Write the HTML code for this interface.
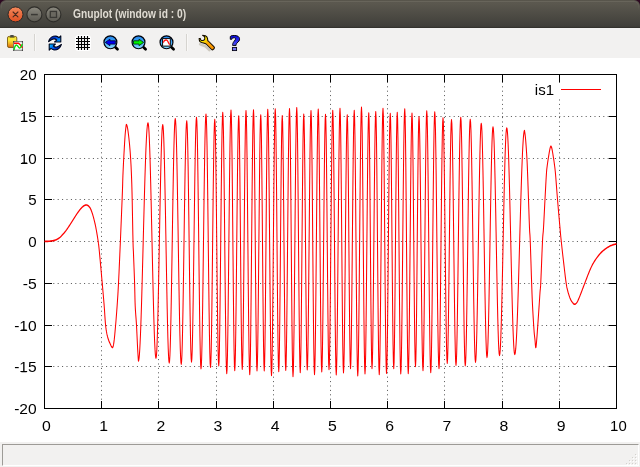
<!DOCTYPE html>
<html>
<head>
<meta charset="utf-8">
<title>Gnuplot (window id : 0)</title>
<style>
html,body{margin:0;padding:0;}
body{width:640px;height:467px;overflow:hidden;background:#2c0a21;font-family:"Liberation Sans",sans-serif;position:relative;}
#win{position:absolute;left:0;top:0;width:640px;height:467px;overflow:hidden;}
#title{position:absolute;left:0;top:0;width:640px;height:28px;background:linear-gradient(#57544a 0px,#59564d 1px,#5b584f 3px,#4d4b44 15px,#403f3a 26px,#3b3a35 27px,#33322e 27px,#33322e 28px);border-radius:6px 6px 0 0;overflow:hidden;}
#title::after{content:"";position:absolute;left:1px;top:1px;width:636px;height:9px;border-top:1px solid #68655b;border-left:1px solid rgba(110,107,97,0.55);border-right:1px solid rgba(110,107,97,0.55);border-radius:5px 5px 0 0;-webkit-mask-image:linear-gradient(#000 0px,#000 3px,transparent 9px);mask-image:linear-gradient(#000 0px,#000 3px,transparent 9px);}
#ttext{position:absolute;left:73px;top:6px;font:bold 12px "Liberation Sans",sans-serif;color:#dfdbd2;white-space:pre;display:inline-block;transform-origin:0 0;transform:scaleX(0.853);line-height:16px;}
#toolbar{position:absolute;left:0;top:28px;width:640px;height:30px;background:#f2f1f0;}
#plot{position:absolute;left:0;top:58px;width:640px;height:384px;background:#ffffff;}
#status{position:absolute;left:0;top:442px;width:640px;height:25px;background:#f2f1f0;}
#sbox{position:absolute;left:2px;top:2px;width:637px;height:22px;box-sizing:border-box;border-top:1px solid #9d9b97;border-left:1px solid #9d9b97;border-right:1px solid #ffffff;border-bottom:1px solid #ffffff;}
svg{position:absolute;left:0;top:0;will-change:transform;}
</style>
</head>
<body>
<div id="win">
<div id="title"><span id="ttext">Gnuplot (window id : 0)</span></div>
<div id="toolbar"></div>
<div id="plot"></div>
<div id="status"><div id="sbox"></div></div>
<svg width="640" height="467" viewBox="0 0 640 467">
<defs>
<linearGradient id="gclose" x1="0" y1="0" x2="0" y2="1"><stop offset="0" stop-color="#f58a5c"/><stop offset="1" stop-color="#df4f22"/></linearGradient>
<linearGradient id="gbtn" x1="0" y1="0" x2="0" y2="1"><stop offset="0" stop-color="#8b897f"/><stop offset="1" stop-color="#5b5952"/></linearGradient>
<linearGradient id="glens" x1="0" y1="0" x2="0" y2="1"><stop offset="0" stop-color="#2484ea"/><stop offset="0.45" stop-color="#3ea4f6"/><stop offset="1" stop-color="#8cdcff"/></linearGradient>
<linearGradient id="gclip" x1="0" y1="0" x2="0" y2="1"><stop offset="0" stop-color="#f4e43c"/><stop offset="0.35" stop-color="#fae838"/><stop offset="0.65" stop-color="#f2b020"/><stop offset="1" stop-color="#dc6410"/></linearGradient>
<linearGradient id="gwr" gradientUnits="userSpaceOnUse" x1="200" y1="37" x2="213" y2="49"><stop offset="0" stop-color="#fff800"/><stop offset="0.3" stop-color="#f8e000"/><stop offset="0.5" stop-color="#fcb400"/><stop offset="0.62" stop-color="#ffa000"/><stop offset="1" stop-color="#f89400"/></linearGradient>
<linearGradient id="grf" x1="0" y1="0" x2="0" y2="1"><stop offset="0" stop-color="#1040c0"/><stop offset="0.5" stop-color="#20a0ff"/><stop offset="1" stop-color="#1040c0"/></linearGradient>
<linearGradient id="grf1" gradientUnits="userSpaceOnUse" x1="52" y1="35.5" x2="58" y2="42"><stop offset="0" stop-color="#001070"/><stop offset="0.45" stop-color="#0040e0"/><stop offset="1" stop-color="#0098ff"/></linearGradient>
<linearGradient id="grf2" gradientUnits="userSpaceOnUse" x1="52" y1="44" x2="58" y2="50.5"><stop offset="0" stop-color="#00a8ff"/><stop offset="0.55" stop-color="#0040e0"/><stop offset="1" stop-color="#001070"/></linearGradient>
<linearGradient id="ghelp" gradientUnits="userSpaceOnUse" x1="0" y1="35" x2="0" y2="46"><stop offset="0" stop-color="#0808d8"/><stop offset="0.5" stop-color="#2828ee"/><stop offset="1" stop-color="#5c5cf8"/></linearGradient>
</defs>

<!-- title bar buttons -->
<g id="tb-buttons">
<circle cx="15.5" cy="14.4" r="7.5" fill="url(#gclose)" stroke="#2f2a26" stroke-width="1"/>
<path d="M13.1 12 L17.9 16.8 M17.9 12 L13.1 16.8" stroke="#4a2a1e" stroke-width="1.15" fill="none" stroke-linecap="round"/>
<circle cx="34.4" cy="14.4" r="7.5" fill="url(#gbtn)" stroke="#2f2e2a" stroke-width="1.1"/>
<path d="M31 14.6 L37.8 14.6" stroke="#3a3935" stroke-width="1.5" fill="none"/>
<circle cx="53.4" cy="14.4" r="7.5" fill="url(#gbtn)" stroke="#2f2e2a" stroke-width="1.1"/>
<rect x="50.3" y="11.4" width="6.2" height="6" fill="#6a6860" stroke="#3a3935" stroke-width="1.3"/>
</g>

<!-- toolbar icons -->
<g id="icons">
<!-- clipboard -->
<rect x="7.5" y="36.4" width="9.3" height="11.1" rx="1.6" fill="url(#gclip)" stroke="#7a5a10" stroke-width="0.9"/>
<rect x="9.6" y="37" width="5" height="1" fill="#6a5a20" opacity="0.7"/>
<rect x="10.1" y="35" width="3.7" height="2" rx="0.8" fill="#4a4a44"/>
<rect x="13.7" y="41.7" width="8.7" height="8.5" fill="#ffffff" stroke="#666666" stroke-width="0.9"/>
<path d="M13.2 41.2h1v1h-1z M21.9 41.2h1v1h-1z M13.2 49.7h1v1h-1z M21.9 49.7h1v1h-1z" fill="#1a1a1a"/>
<path d="M14 43.3 L18.4 43.3 C19.8 43.6 20.8 45.4 22.4 47.8" stroke="#ff0808" stroke-width="1.4" fill="none"/>
<path d="M14 50 C14.4 47.6 15 46 15.6 45.4 C16.4 44.6 17 45 17.8 46.2 C18.8 47.8 19.6 48.6 20.6 47.4 C21.2 46.6 21.8 45.2 22.3 44" stroke="#08e010" stroke-width="1.4" fill="none"/>
<!-- separator 1 -->
<rect x="34" y="34" width="1" height="17" fill="#d6d4d0"/>
<rect x="35" y="34" width="1" height="17" fill="#f9f8f7"/>
<!-- refresh -->
<g>
<g fill="#fff" stroke="#fff" stroke-width="2.6" stroke-linejoin="round" opacity="0.95">
<path d="M48.6 41.6 C49.6 37.4 53 35.7 56 36.1 C57.2 36.3 58.2 36.9 59 37.6 L60.8 35.8 L60.8 42 L54.6 42 L56.6 40 C55.6 39 54 38.7 52.6 39.3 C51 39.9 49.8 40.8 48.6 41.6 Z"/>
<path d="M61.4 44.4 C60.4 48.6 57 50.3 54 49.9 C52.8 49.7 51.8 49.1 51 48.4 L49.2 50.2 L49.2 44 L55.4 44 L53.4 46 C54.4 47 56 47.3 57.4 46.7 C59 46.1 60.2 45.2 61.4 44.4 Z"/>
</g>
<path d="M48.6 41.6 C49.6 37.4 53 35.7 56 36.1 C57.2 36.3 58.2 36.9 59 37.6 L60.8 35.8 L60.8 42 L54.6 42 L56.6 40 C55.6 39 54 38.7 52.6 39.3 C51 39.9 49.8 40.8 48.6 41.6 Z" fill="url(#grf1)" stroke="#00061c" stroke-width="1.15" stroke-linejoin="round"/>
<path d="M61.4 44.4 C60.4 48.6 57 50.3 54 49.9 C52.8 49.7 51.8 49.1 51 48.4 L49.2 50.2 L49.2 44 L55.4 44 L53.4 46 C54.4 47 56 47.3 57.4 46.7 C59 46.1 60.2 45.2 61.4 44.4 Z" fill="url(#grf2)" stroke="#00061c" stroke-width="1.15" stroke-linejoin="round"/>
</g>
<!-- grid -->
<rect x="75" y="35" width="16" height="16" rx="3.5" fill="#ffffff"/>
<path d="M76 38.5H90 M76 41.5H90 M76 44.5H90 M76 47.5H90 M78.5 36V50 M81.5 36V50 M84.5 36V50 M87.5 36V50" stroke="#000" stroke-width="1.15" fill="none"/>
<!-- zoom prev -->
<g>
<path d="M115.4 47.2 L117.5 49.3" stroke="#000" stroke-width="2.7" stroke-linecap="round"/>
<circle cx="110.4" cy="42.3" r="6.45" fill="url(#glens)" stroke="#000008" stroke-width="1.2"/>
<path d="M105.3 42.4 L109.9 39.2 L109.9 40.8 L115.4 40.8 L115.4 44.1 L109.9 44.1 L109.9 45.7 Z" fill="#0000f4" stroke="#000028" stroke-width="0.8" stroke-linejoin="round"/>
</g>
<!-- zoom next -->
<g>
<path d="M143.5 47.2 L145.6 49.3" stroke="#000" stroke-width="2.7" stroke-linecap="round"/>
<circle cx="138.5" cy="42.3" r="6.45" fill="url(#glens)" stroke="#000008" stroke-width="1.2"/>
<path d="M143.6 42.4 L139 39.2 L139 40.8 L133.5 40.8 L133.5 44.1 L139 44.1 L139 45.7 Z" fill="#00f400" stroke="#002800" stroke-width="0.8" stroke-linejoin="round"/>
</g>
<!-- zoom fit -->
<g>
<path d="M171.5 47.2 L173.6 49.3" stroke="#000" stroke-width="2.7" stroke-linecap="round"/>
<circle cx="166.5" cy="42.3" r="6.45" fill="url(#glens)" stroke="#000008" stroke-width="1.2"/>
<rect x="162.6" y="38.6" width="7.7" height="7.5" fill="#fff" stroke="#000" stroke-width="0.95"/>
<path d="M163.3 42.6 C163.9 40.8 164.6 40 165.8 40 L166.9 40.2 C168.2 41 168.3 43.6 169.7 44.6" stroke="#ff1010" stroke-width="1.3" fill="none"/>
</g>
<!-- separator 2 -->
<rect x="186" y="34" width="1" height="17" fill="#d6d4d0"/>
<rect x="187" y="34" width="1" height="17" fill="#f9f8f7"/>
<!-- wrench -->
<g>
<path d="M200.2 44.2 C202 45.4 204.4 45.6 205.6 46.4 L209.4 50" stroke="#a8a08c" stroke-width="2.6" stroke-linecap="round" fill="none" opacity="0.5"/>
<path d="M202.6 35.3 L205.4 35.8 C206.6 36.4 207.3 37.2 207.5 38.4 L207.8 40.7 L208.3 41 L213.9 46.6 C214.6 47.4 214.6 48 214.2 48.5 L212.7 49.8 C212.3 50 211.9 49.8 211.6 49.5 L206.1 44 L205 43.6 L201.7 42.6 C200.6 42.2 199.8 41.6 199.5 41 L199.1 38.6 L200.2 38.4 L200.7 39.8 C201.4 40.5 202.3 40.7 203.1 40.5 C204 40.2 204.6 39.7 204.7 39.1 C204.9 38.2 204.8 37.4 204.5 36.7 Z" fill="url(#gwr)" stroke="#140c00" stroke-width="1.05" stroke-linejoin="round"/>
</g>
<!-- help -->
<path d="M230.3 36.5 C230.9 35.9 231.5 35.7 232.2 35.6 C233 35.5 234 35.5 234.8 35.5 C236.2 35.5 237.4 35.9 238.2 36.4 C239 37 239.4 37.7 239.5 38.4 L239.5 39.8 C239.2 40.8 238.8 41.4 238 42.1 L236.4 43.7 C236.1 44.2 236.1 44.8 236.1 45.4 L232.6 45.4 C232.5 44.6 232.6 44.2 232.8 43.7 C233 42.9 233.3 42.3 233.8 41.7 L235.1 40 C235.5 39.4 235.6 38.9 235.5 38.5 C235.3 38 235 37.8 234.5 37.8 L232.9 37.9 C232.3 38.1 231.9 38.4 231.8 38.9 L231.8 39.3 L230.3 39.3 Z" fill="url(#ghelp)" stroke="#000010" stroke-width="1" stroke-linejoin="round"/>
<rect x="232.4" y="47.4" width="4.2" height="3.2" fill="#7474f6" stroke="#000010" stroke-width="0.85"/>
</g>

<!-- plot -->
<g id="grid" stroke="#000" stroke-opacity="0.68" stroke-width="1" fill="none" stroke-dasharray="1 3.4">
<path d="M101.5 408.5 V74.5"/>
<path d="M158.5 408.5 V74.5"/>
<path d="M216.5 408.5 V74.5"/>
<path d="M273.5 408.5 V74.5"/>
<path d="M330.5 408.5 V74.5"/>
<path d="M387.5 408.5 V74.5"/>
<path d="M444.5 408.5 V74.5"/>
<path d="M502.5 408.5 V74.5"/>
<path d="M559.5 408.5 V74.5"/>
<path d="M44.5 116.5 H616.5"/>
<path d="M44.5 158.5 H616.5"/>
<path d="M44.5 199.5 H616.5"/>
<path d="M44.5 241.5 H616.5"/>
<path d="M44.5 283.5 H616.5"/>
<path d="M44.5 325.5 H616.5"/>
<path d="M44.5 366.5 H616.5"/>
</g>
<rect x="558.8" y="83" width="1.6" height="15.2" fill="#fff"/>
<g id="axes" stroke="#000" stroke-width="1" fill="none">
<rect x="44.5" y="74.5" width="572" height="334"/>
<path d="M101.5 408.5 v-7.5 M101.5 74.5 v7.5"/>
<path d="M158.5 408.5 v-7.5 M158.5 74.5 v7.5"/>
<path d="M216.5 408.5 v-7.5 M216.5 74.5 v7.5"/>
<path d="M273.5 408.5 v-7.5 M273.5 74.5 v7.5"/>
<path d="M330.5 408.5 v-7.5 M330.5 74.5 v7.5"/>
<path d="M387.5 408.5 v-7.5 M387.5 74.5 v7.5"/>
<path d="M444.5 408.5 v-7.5 M444.5 74.5 v7.5"/>
<path d="M502.5 408.5 v-7.5 M502.5 74.5 v7.5"/>
<path d="M559.5 408.5 v-7.5 M559.5 74.5 v7.5"/>
<path d="M44.5 116.5 h7.5 M616.5 116.5 h-7.5"/>
<path d="M44.5 158.5 h7.5 M616.5 158.5 h-7.5"/>
<path d="M44.5 199.5 h7.5 M616.5 199.5 h-7.5"/>
<path d="M44.5 241.5 h7.5 M616.5 241.5 h-7.5"/>
<path d="M44.5 283.5 h7.5 M616.5 283.5 h-7.5"/>
<path d="M44.5 325.5 h7.5 M616.5 325.5 h-7.5"/>
<path d="M44.5 366.5 h7.5 M616.5 366.5 h-7.5"/>
</g>
<g id="labels" font-family="Liberation Sans, sans-serif" font-size="14.5" fill="#000">
<text x="46.4" y="430.8" text-anchor="middle" textLength="8.8" lengthAdjust="spacingAndGlyphs">0</text>
<text x="103.6" y="430.8" text-anchor="middle" textLength="8.8" lengthAdjust="spacingAndGlyphs">1</text>
<text x="160.8" y="430.8" text-anchor="middle" textLength="8.8" lengthAdjust="spacingAndGlyphs">2</text>
<text x="218.0" y="430.8" text-anchor="middle" textLength="8.8" lengthAdjust="spacingAndGlyphs">3</text>
<text x="275.2" y="430.8" text-anchor="middle" textLength="8.8" lengthAdjust="spacingAndGlyphs">4</text>
<text x="332.4" y="430.8" text-anchor="middle" textLength="8.8" lengthAdjust="spacingAndGlyphs">5</text>
<text x="389.6" y="430.8" text-anchor="middle" textLength="8.8" lengthAdjust="spacingAndGlyphs">6</text>
<text x="446.8" y="430.8" text-anchor="middle" textLength="8.8" lengthAdjust="spacingAndGlyphs">7</text>
<text x="504.0" y="430.8" text-anchor="middle" textLength="8.8" lengthAdjust="spacingAndGlyphs">8</text>
<text x="561.2" y="430.8" text-anchor="middle" textLength="8.8" lengthAdjust="spacingAndGlyphs">9</text>
<text x="618.4" y="430.8" text-anchor="middle" textLength="16.6" lengthAdjust="spacingAndGlyphs">10</text>
<text x="36.7" y="80.0" text-anchor="end" textLength="16.9" lengthAdjust="spacingAndGlyphs">20</text>
<text x="36.7" y="121.8" text-anchor="end" textLength="16.9" lengthAdjust="spacingAndGlyphs">15</text>
<text x="36.7" y="163.5" text-anchor="end" textLength="16.9" lengthAdjust="spacingAndGlyphs">10</text>
<text x="36.7" y="205.2" text-anchor="end" textLength="8.4" lengthAdjust="spacingAndGlyphs">5</text>
<text x="36.7" y="247.0" text-anchor="end" textLength="8.4" lengthAdjust="spacingAndGlyphs">0</text>
<text x="36.7" y="288.8" text-anchor="end" textLength="14.0" lengthAdjust="spacingAndGlyphs">-5</text>
<text x="36.7" y="330.5" text-anchor="end" textLength="22.5" lengthAdjust="spacingAndGlyphs">-10</text>
<text x="36.7" y="372.2" text-anchor="end" textLength="22.5" lengthAdjust="spacingAndGlyphs">-15</text>
<text x="36.7" y="414.0" text-anchor="end" textLength="22.5" lengthAdjust="spacingAndGlyphs">-20</text>
<text x="554" y="95" text-anchor="end" textLength="19.2" lengthAdjust="spacingAndGlyphs">is1</text>
<rect x="101.35" y="429.75" width="5.3" height="1.05"/>
<rect x="611.85" y="429.75" width="5.3" height="1.05"/>
<rect x="21.85" y="120.70" width="5.3" height="1.05"/>
<rect x="21.85" y="162.45" width="5.3" height="1.05"/>
<rect x="21.35" y="329.45" width="5.3" height="1.05"/>
<rect x="21.35" y="371.20" width="5.3" height="1.05"/>
<rect x="547.35" y="93.95" width="5.3" height="1.05"/>
</g>
<g transform="scale(1,1.5)"><path id="curve" d="M44.50 160.93 L44.95 160.93 L45.57 160.93 L46.31 160.93 L47.11 160.92 L47.92 160.90 L48.70 160.87 L49.48 160.81 L50.30 160.75 L51.14 160.67 L51.96 160.58 L52.72 160.49 L53.40 160.40 L53.97 160.32 L54.44 160.24 L54.86 160.17 L55.26 160.07 L55.70 159.96 L56.20 159.80 L56.79 159.60 L57.43 159.38 L58.10 159.12 L58.77 158.85 L59.41 158.56 L60.00 158.27 L60.52 157.96 L61.00 157.64 L61.46 157.31 L61.90 156.97 L62.34 156.62 L62.80 156.27 L63.28 155.91 L63.76 155.55 L64.25 155.18 L64.74 154.80 L65.22 154.40 L65.70 154.00 L66.16 153.59 L66.61 153.18 L67.05 152.76 L67.50 152.32 L67.98 151.85 L68.50 151.33 L69.06 150.77 L69.66 150.16 L70.29 149.52 L70.93 148.86 L71.57 148.20 L72.20 147.53 L72.83 146.86 L73.46 146.18 L74.09 145.48 L74.73 144.79 L75.37 144.12 L76.00 143.47 L76.64 142.83 L77.30 142.20 L77.96 141.58 L78.61 140.98 L79.22 140.43 L79.80 139.93 L80.33 139.49 L80.84 139.09 L81.32 138.73 L81.77 138.41 L82.20 138.12 L82.60 137.87 L82.97 137.65 L83.31 137.47 L83.62 137.33 L83.91 137.20 L84.21 137.10 L84.50 137.00 L84.80 136.91 L85.09 136.83 L85.38 136.76 L85.66 136.71 L85.93 136.68 L86.20 136.67 L86.46 136.67 L86.72 136.69 L86.97 136.73 L87.22 136.79 L87.46 136.85 L87.70 136.93 L87.92 137.02 L88.14 137.11 L88.34 137.22 L88.55 137.34 L88.77 137.49 L89.00 137.67 L89.25 137.86 L89.50 138.08 L89.77 138.31 L90.04 138.58 L90.32 138.90 L90.60 139.27 L90.89 139.69 L91.19 140.17 L91.49 140.70 L91.79 141.26 L92.10 141.85 L92.40 142.47 L92.70 143.12 L93.01 143.81 L93.31 144.54 L93.61 145.28 L93.91 146.04 L94.20 146.80 L94.48 147.55 L94.75 148.31 L95.02 149.08 L95.28 149.87 L95.54 150.69 L95.80 151.53 L96.06 152.44 L96.33 153.40 L96.59 154.39 L96.84 155.37 L97.08 156.32 L97.30 157.20 L97.50 157.99 L97.67 158.71 L97.83 159.40 L97.99 160.08 L98.14 160.80 L98.30 161.60 L98.44 162.29 L98.56 162.82 L98.68 163.39 L98.82 164.20 L99.02 165.44 L99.30 167.33 L99.69 170.09 L100.18 173.60 L100.72 177.55 L101.27 181.63 L101.79 185.53 L102.25 188.93 L102.64 191.85 L102.99 194.52 L103.32 197.01 L103.63 199.39 L103.92 201.69 L104.20 204.00 L104.46 206.33 L104.69 208.64 L104.90 210.89 L105.12 213.03 L105.34 215.03 L105.60 216.83 L105.88 218.43 L106.17 219.84 L106.48 221.10 L106.80 222.25 L107.14 223.31 L107.50 224.33 L107.88 225.29 L108.29 226.15 L108.71 226.93 L109.14 227.65 L109.58 228.31 L110.00 228.93 L110.43 229.57 L110.87 230.23 L111.31 230.84 L111.74 231.32 L112.14 231.62 L112.50 231.67 L112.81 231.47 L113.07 231.09 L113.31 230.51 L113.53 229.76 L113.76 228.81 L114.00 227.67 L114.26 226.30 L114.52 224.69 L114.79 222.89 L115.06 220.94 L115.33 218.91 L115.60 216.83 L115.88 214.66 L116.16 212.34 L116.45 209.93 L116.73 207.48 L117.00 205.04 L117.25 202.67 L117.48 200.47 L117.68 198.42 L117.88 196.39 L118.07 194.23 L118.28 191.79 L118.50 188.93 L118.74 185.70 L118.99 182.21 L119.24 178.44 L119.51 174.39 L119.80 170.02 L120.10 165.33 L120.44 159.95 L120.83 153.81 L121.23 147.36 L121.62 141.05 L121.97 135.34 L122.25 130.67 L122.44 127.19 L122.57 124.59 L122.66 122.58 L122.72 120.89 L122.80 119.23 L122.90 117.33 L123.03 115.28 L123.15 113.31 L123.29 111.39 L123.43 109.44 L123.58 107.44 L123.75 105.33 L123.94 103.01 L124.15 100.48 L124.37 97.89 L124.59 95.38 L124.81 93.09 L125.00 91.17 L125.17 89.62 L125.34 88.34 L125.49 87.28 L125.64 86.39 L125.77 85.62 L125.90 84.93 L126.01 84.32 L126.10 83.83 L126.18 83.45 L126.26 83.21 L126.37 83.10 L126.50 83.13 L126.67 83.29 L126.85 83.56 L127.06 83.96 L127.28 84.52 L127.51 85.25 L127.75 86.17 L128.01 87.33 L128.29 88.74 L128.58 90.31 L128.87 91.99 L129.15 93.69 L129.40 95.33 L129.63 96.93 L129.84 98.53 L130.05 100.16 L130.24 101.82 L130.42 103.54 L130.60 105.33 L130.77 107.20 L130.93 109.14 L131.09 111.12 L131.23 113.16 L131.37 115.23 L131.50 117.33 L131.61 119.28 L131.71 121.06 L131.80 122.86 L131.89 124.93 L131.99 127.45 L132.10 130.67 L132.24 134.97 L132.39 140.28 L132.56 146.05 L132.72 151.76 L132.87 156.86 L133.00 160.83 L133.10 163.38 L133.17 164.86 L133.24 165.74 L133.30 166.48 L133.39 167.53 L133.50 169.33 L133.65 172.01 L133.84 175.21 L134.04 178.72 L134.25 182.32 L134.44 185.80 L134.60 188.93 L134.72 191.73 L134.81 194.37 L134.89 196.89 L134.97 199.31 L135.07 201.67 L135.20 204.00 L135.38 206.24 L135.59 208.36 L135.82 210.41 L136.06 212.47 L136.29 214.59 L136.50 216.83 L136.70 219.30 L136.89 221.96 L137.08 224.68 L137.26 227.34 L137.44 229.82 L137.60 232.00 L137.76 233.92 L137.92 235.69 L138.07 237.28 L138.20 238.66 L138.32 239.80 L138.40 240.67 L138.74 240.17 L139.09 238.68 L139.43 236.21 L139.77 232.81 L140.11 228.51 L140.46 223.36 L140.80 217.43 L141.14 210.80 L141.49 203.54 L141.83 195.75 L142.17 187.54 L142.51 178.99 L142.86 170.22 L143.20 161.33 L143.54 152.45 L143.89 143.68 L144.23 135.13 L144.57 126.91 L144.91 119.13 L145.26 111.87 L145.60 105.24 L145.94 99.31 L146.29 94.16 L146.63 89.86 L146.97 86.45 L147.31 83.99 L147.66 82.50 L148.00 82.00 L148.33 82.67 L148.67 84.67 L149.00 87.97 L149.33 92.50 L149.67 98.19 L150.00 104.95 L150.33 112.66 L150.67 121.18 L151.00 130.38 L151.33 140.08 L151.67 150.14 L152.00 160.37 L152.33 170.60 L152.67 180.65 L153.00 190.36 L153.33 199.55 L153.67 208.07 L154.00 215.78 L154.33 222.54 L154.67 228.23 L155.00 232.77 L155.33 236.06 L155.67 238.06 L156.00 238.73 L156.34 237.78 L156.68 234.93 L157.01 230.26 L157.35 223.88 L157.69 215.95 L158.03 206.67 L158.36 196.26 L158.70 184.99 L159.04 173.12 L159.38 160.95 L159.71 148.78 L160.05 136.91 L160.39 125.64 L160.72 115.23 L161.06 105.95 L161.40 98.02 L161.74 91.64 L162.07 86.97 L162.41 84.12 L162.75 83.17 L163.09 84.25 L163.43 87.47 L163.78 92.73 L164.12 99.90 L164.46 108.78 L164.80 119.12 L165.14 130.65 L165.49 143.05 L165.83 155.98 L166.17 169.09 L166.51 182.02 L166.86 194.41 L167.20 205.94 L167.54 216.29 L167.88 225.16 L168.22 232.33 L168.57 237.60 L168.91 240.82 L169.25 241.90 L169.58 240.66 L169.92 236.99 L170.25 231.00 L170.58 222.86 L170.92 212.83 L171.25 201.22 L171.58 188.36 L171.92 174.66 L172.25 160.53 L172.58 146.40 L172.92 132.70 L173.25 119.85 L173.58 108.23 L173.92 98.20 L174.25 90.07 L174.58 84.07 L174.92 80.40 L175.25 79.17 L175.58 80.41 L175.92 84.10 L176.25 90.12 L176.58 98.30 L176.92 108.38 L177.25 120.06 L177.58 132.98 L177.92 146.75 L178.25 160.95 L178.58 175.15 L178.92 188.92 L179.25 201.84 L179.58 213.52 L179.92 223.60 L180.25 231.78 L180.58 237.80 L180.92 241.49 L181.25 242.73 L181.59 241.18 L181.94 236.57 L182.28 229.08 L182.62 219.00 L182.97 206.72 L183.31 192.71 L183.66 177.51 L184.00 161.70 L184.34 145.89 L184.69 130.69 L185.03 116.68 L185.38 104.40 L185.72 94.32 L186.06 86.83 L186.41 82.22 L186.75 80.67 L187.09 82.68 L187.43 88.62 L187.77 98.18 L188.11 110.89 L188.45 126.12 L188.79 143.09 L189.12 160.95 L189.46 178.81 L189.80 195.78 L190.14 211.01 L190.48 223.72 L190.82 233.28 L191.16 239.22 L191.50 241.23 L191.83 239.45 L192.17 234.19 L192.50 225.68 L192.83 214.28 L193.17 200.51 L193.50 184.95 L193.83 168.30 L194.17 151.27 L194.50 134.61 L194.83 119.06 L195.17 105.28 L195.50 93.89 L195.83 85.38 L196.17 80.11 L196.50 78.33 L196.85 80.77 L197.19 87.92 L197.54 99.38 L197.88 114.49 L198.23 132.35 L198.58 151.94 L198.92 172.12 L199.27 191.71 L199.62 209.58 L199.96 224.68 L200.31 236.15 L200.65 243.30 L201.00 245.73 L201.33 243.88 L201.67 238.40 L202.00 229.54 L202.33 217.68 L202.67 203.34 L203.00 187.15 L203.33 169.81 L203.67 152.09 L204.00 134.75 L204.33 118.56 L204.67 104.22 L205.00 92.36 L205.33 83.50 L205.67 78.02 L206.00 76.17 L206.35 78.62 L206.69 85.82 L207.04 97.36 L207.38 112.57 L207.73 130.56 L208.08 150.29 L208.42 170.61 L208.77 190.34 L209.12 208.33 L209.46 223.54 L209.81 235.08 L210.15 242.28 L210.50 244.73 L210.85 241.92 L211.21 233.68 L211.56 220.56 L211.92 203.47 L212.27 183.56 L212.62 162.20 L212.98 140.84 L213.33 120.93 L213.69 103.84 L214.04 90.72 L214.40 82.48 L214.75 79.67 L215.08 82.46 L215.42 90.66 L215.75 103.69 L216.08 120.68 L216.42 140.47 L216.75 161.70 L217.08 182.93 L217.42 202.72 L217.75 219.71 L218.08 232.74 L218.42 240.94 L218.75 243.73 L219.08 240.86 L219.42 232.43 L219.75 219.02 L220.08 201.55 L220.42 181.20 L220.75 159.37 L221.08 137.53 L221.42 117.18 L221.75 99.71 L222.08 86.30 L222.42 77.87 L222.75 75.00 L223.08 77.96 L223.42 86.65 L223.75 100.47 L224.08 118.47 L224.42 139.45 L224.75 161.95 L225.08 184.45 L225.42 205.42 L225.75 223.43 L226.08 237.25 L226.42 245.94 L226.75 248.90 L227.10 245.91 L227.46 237.15 L227.81 223.21 L228.17 205.05 L228.52 183.90 L228.88 161.20 L229.23 138.50 L229.58 117.35 L229.94 99.19 L230.29 85.25 L230.65 76.49 L231.00 73.50 L231.34 77.01 L231.68 87.26 L232.02 103.42 L232.36 124.18 L232.70 147.86 L233.05 172.54 L233.39 196.22 L233.73 216.98 L234.07 233.14 L234.41 243.39 L234.75 246.90 L235.08 244.01 L235.42 235.54 L235.75 222.07 L236.08 204.51 L236.42 184.06 L236.75 162.12 L237.08 140.17 L237.42 119.73 L237.75 102.17 L238.08 88.69 L238.42 80.22 L238.75 77.33 L239.10 81.46 L239.45 93.45 L239.80 112.11 L240.15 135.63 L240.50 161.70 L240.85 187.77 L241.20 211.29 L241.55 229.95 L241.90 241.94 L242.25 246.07 L242.59 242.58 L242.93 232.40 L243.27 216.34 L243.61 195.72 L243.95 172.21 L244.30 147.69 L244.64 124.18 L244.98 103.56 L245.32 87.50 L245.66 77.32 L246.00 73.83 L246.34 77.39 L246.68 87.78 L247.02 104.16 L247.36 125.20 L247.70 149.20 L248.05 174.20 L248.39 198.20 L248.73 219.24 L249.07 235.62 L249.41 246.01 L249.75 249.57 L250.09 246.00 L250.43 235.58 L250.77 219.15 L251.11 198.05 L251.45 173.99 L251.80 148.91 L252.14 124.85 L252.48 103.75 L252.82 87.32 L253.16 76.90 L253.50 73.33 L253.85 77.58 L254.20 89.92 L254.55 109.14 L254.90 133.36 L255.25 160.20 L255.60 187.04 L255.95 211.26 L256.30 230.48 L256.65 242.82 L257.00 247.07 L257.34 243.62 L257.68 233.54 L258.02 217.66 L258.36 197.26 L258.70 173.99 L259.05 149.74 L259.39 126.47 L259.73 106.07 L260.07 90.19 L260.41 80.12 L260.75 76.67 L261.10 80.84 L261.45 92.94 L261.80 111.79 L262.15 135.54 L262.50 161.87 L262.85 188.19 L263.20 211.95 L263.55 230.79 L263.90 242.90 L264.25 247.07 L264.60 242.81 L264.95 230.44 L265.30 211.19 L265.65 186.93 L266.00 160.03 L266.35 133.14 L266.70 108.88 L267.05 89.62 L267.40 77.26 L267.75 73.00 L268.09 76.59 L268.43 87.07 L268.77 103.59 L269.11 124.80 L269.45 149.01 L269.80 174.23 L270.14 198.43 L270.48 219.65 L270.82 236.17 L271.16 246.64 L271.50 250.23 L271.84 246.64 L272.18 236.14 L272.52 219.59 L272.86 198.33 L273.20 174.09 L273.55 148.81 L273.89 124.57 L274.23 103.31 L274.57 86.76 L274.91 76.26 L275.25 72.67 L275.60 76.95 L275.95 89.37 L276.30 108.71 L276.65 133.09 L277.00 160.12 L277.35 187.14 L277.70 211.52 L278.05 230.87 L278.40 243.29 L278.75 247.57 L279.10 243.40 L279.45 231.29 L279.80 212.45 L280.15 188.69 L280.50 162.37 L280.85 136.04 L281.20 112.29 L281.55 93.44 L281.90 81.34 L282.25 77.17 L282.60 81.32 L282.95 93.36 L283.30 112.12 L283.65 135.75 L284.00 161.95 L284.35 188.15 L284.70 211.78 L285.05 230.54 L285.40 242.58 L285.75 246.73 L286.09 243.20 L286.43 232.90 L286.77 216.67 L287.11 195.81 L287.45 172.01 L287.80 147.22 L288.14 123.43 L288.48 102.57 L288.82 86.33 L289.16 76.03 L289.50 72.50 L289.85 76.87 L290.20 89.54 L290.55 109.27 L290.90 134.14 L291.25 161.70 L291.60 189.26 L291.95 214.13 L292.30 233.86 L292.65 246.53 L293.00 250.90 L293.34 247.27 L293.68 236.69 L294.02 220.00 L294.36 198.56 L294.70 174.11 L295.05 148.62 L295.39 124.17 L295.73 102.73 L296.07 86.05 L296.41 75.46 L296.75 71.83 L297.10 76.15 L297.45 88.68 L297.80 108.19 L298.15 132.78 L298.50 160.03 L298.85 187.29 L299.20 211.88 L299.55 231.39 L299.90 243.92 L300.25 248.23 L300.60 244.02 L300.95 231.80 L301.30 212.77 L301.65 188.79 L302.00 162.20 L302.35 135.61 L302.70 111.63 L303.05 92.60 L303.40 80.38 L303.75 76.17 L304.10 80.33 L304.45 92.42 L304.80 111.25 L305.15 134.98 L305.50 161.28 L305.85 187.59 L306.20 211.31 L306.55 230.14 L306.90 242.23 L307.25 246.40 L307.59 242.90 L307.93 232.70 L308.27 216.62 L308.61 195.96 L308.95 172.40 L309.30 147.84 L309.64 124.27 L309.98 103.61 L310.32 87.53 L310.66 77.33 L311.00 73.83 L311.35 78.13 L311.70 90.61 L312.05 110.05 L312.40 134.55 L312.75 161.70 L313.10 188.85 L313.45 213.35 L313.80 232.79 L314.15 245.27 L314.50 249.57 L314.84 245.99 L315.18 235.54 L315.52 219.07 L315.86 197.91 L316.20 173.78 L316.55 148.62 L316.89 124.49 L317.23 103.33 L317.57 86.86 L317.91 76.41 L318.25 72.83 L318.60 77.11 L318.95 89.53 L319.30 108.88 L319.65 133.26 L320.00 160.28 L320.35 187.31 L320.70 211.69 L321.05 231.03 L321.40 243.45 L321.75 247.73 L322.09 244.26 L322.43 234.13 L322.77 218.15 L323.11 197.63 L323.45 174.23 L323.80 149.84 L324.14 126.43 L324.48 105.91 L324.82 89.94 L325.16 79.80 L325.50 76.33 L325.85 80.49 L326.20 92.56 L326.55 111.35 L326.90 135.03 L327.25 161.28 L327.60 187.53 L327.95 211.22 L328.30 230.01 L328.65 242.08 L329.00 246.23 L329.34 242.74 L329.68 232.54 L330.02 216.45 L330.36 195.79 L330.70 172.23 L331.05 147.67 L331.39 124.11 L331.73 103.45 L332.07 87.36 L332.41 77.16 L332.75 73.67 L333.10 77.98 L333.45 90.48 L333.80 109.96 L334.15 134.50 L334.50 161.70 L334.85 188.90 L335.20 213.44 L335.55 232.92 L335.90 245.42 L336.25 249.73 L336.59 246.14 L336.93 235.65 L337.27 219.12 L337.61 197.88 L337.95 173.66 L338.30 148.41 L338.64 124.19 L338.98 102.95 L339.32 86.41 L339.66 75.93 L340.00 72.33 L340.35 76.64 L340.70 89.15 L341.05 108.62 L341.40 133.16 L341.75 160.37 L342.10 187.57 L342.45 212.11 L342.80 231.59 L343.15 244.09 L343.50 248.40 L343.84 244.92 L344.18 234.77 L344.52 218.76 L344.86 198.20 L345.20 174.75 L345.55 150.31 L345.89 126.86 L346.23 106.30 L346.57 90.30 L346.91 80.14 L347.25 76.67 L347.61 81.76 L347.97 96.42 L348.33 118.89 L348.69 146.45 L349.06 175.78 L349.42 203.34 L349.78 225.81 L350.14 240.47 L350.50 245.57 L350.84 242.09 L351.18 231.92 L351.52 215.90 L351.86 195.32 L352.20 171.85 L352.55 147.38 L352.89 123.91 L353.23 103.33 L353.57 87.31 L353.91 77.15 L354.25 73.67 L354.60 77.99 L354.95 90.54 L355.30 110.09 L355.65 134.73 L356.00 162.03 L356.35 189.34 L356.70 213.97 L357.05 233.52 L357.40 246.08 L357.75 250.40 L358.09 246.78 L358.43 236.20 L358.77 219.53 L359.11 198.11 L359.45 173.68 L359.80 148.22 L360.14 123.79 L360.48 102.37 L360.82 85.70 L361.16 75.12 L361.50 71.50 L361.85 75.85 L362.20 88.46 L362.55 108.10 L362.90 132.85 L363.25 160.28 L363.60 187.72 L363.95 212.47 L364.30 232.11 L364.65 244.72 L365.00 249.07 L365.34 245.55 L365.68 235.28 L366.02 219.09 L366.36 198.29 L366.70 174.56 L367.05 149.84 L367.39 126.11 L367.73 105.31 L368.07 89.12 L368.41 78.85 L368.75 75.33 L369.11 80.47 L369.47 95.25 L369.83 117.89 L370.19 145.67 L370.56 175.23 L370.92 203.01 L371.28 225.65 L371.64 240.43 L372.00 245.57 L372.34 242.10 L372.68 231.99 L373.02 216.05 L373.36 195.57 L373.70 172.21 L374.05 147.86 L374.39 124.50 L374.73 104.02 L375.07 88.08 L375.41 77.96 L375.75 74.50 L376.10 78.78 L376.45 91.22 L376.80 110.58 L377.15 134.98 L377.50 162.03 L377.85 189.08 L378.20 213.48 L378.55 232.85 L378.90 245.28 L379.25 249.57 L379.59 245.98 L379.93 235.50 L380.27 218.98 L380.61 197.76 L380.95 173.56 L381.30 148.34 L381.64 124.14 L381.98 102.92 L382.32 86.40 L382.66 75.92 L383.00 72.33 L383.35 76.65 L383.70 89.18 L384.05 108.69 L384.40 133.28 L384.75 160.53 L385.10 187.79 L385.45 212.38 L385.80 231.89 L386.15 244.42 L386.50 248.73 L386.84 245.23 L387.18 235.00 L387.52 218.87 L387.86 198.15 L388.20 174.51 L388.55 149.89 L388.89 126.25 L389.23 105.53 L389.57 89.40 L389.91 79.17 L390.25 75.67 L390.60 79.82 L390.95 91.89 L391.30 110.68 L391.65 134.37 L392.00 160.62 L392.35 186.87 L392.70 210.55 L393.05 229.34 L393.40 241.41 L393.75 245.57 L394.10 241.39 L394.45 229.28 L394.80 210.41 L395.15 186.64 L395.50 160.28 L395.85 133.93 L396.20 110.16 L396.55 91.29 L396.90 79.17 L397.25 75.00 L397.60 79.26 L397.95 91.62 L398.30 110.88 L398.65 135.14 L399.00 162.03 L399.35 188.93 L399.70 213.19 L400.05 232.44 L400.40 244.81 L400.75 249.07 L401.08 246.06 L401.42 237.25 L401.75 223.23 L402.08 204.97 L402.42 183.69 L402.75 160.87 L403.08 138.04 L403.42 116.77 L403.75 98.50 L404.08 84.48 L404.42 75.67 L404.75 72.67 L405.10 76.98 L405.45 89.50 L405.80 108.99 L406.15 133.55 L406.50 160.78 L406.85 188.01 L407.20 212.58 L407.55 232.07 L407.90 244.59 L408.25 248.90 L408.59 245.39 L408.93 235.14 L409.27 218.98 L409.61 198.22 L409.95 174.54 L410.30 149.86 L410.64 126.18 L410.98 105.42 L411.32 89.26 L411.66 79.01 L412.00 75.50 L412.35 79.63 L412.70 91.61 L413.05 110.28 L413.40 133.80 L413.75 159.87 L414.10 185.94 L414.45 209.46 L414.80 228.12 L415.15 240.10 L415.50 244.23 L415.85 240.16 L416.20 228.34 L416.55 209.94 L416.90 186.74 L417.25 161.03 L417.60 135.32 L417.95 112.13 L418.30 93.72 L418.65 81.91 L419.00 77.83 L419.33 80.71 L419.67 89.16 L420.00 102.59 L420.33 120.10 L420.67 140.49 L421.00 162.37 L421.33 184.25 L421.67 204.63 L422.00 222.14 L422.33 235.57 L422.67 244.02 L423.00 246.90 L423.34 243.40 L423.68 233.18 L424.02 217.06 L424.36 196.36 L424.70 172.75 L425.05 148.15 L425.39 124.54 L425.73 103.84 L426.07 87.72 L426.41 77.50 L426.75 74.00 L427.08 76.97 L427.42 85.67 L427.75 99.52 L428.08 117.56 L428.42 138.57 L428.75 161.12 L429.08 183.66 L429.42 204.67 L429.75 222.72 L430.08 236.56 L430.42 245.26 L430.75 248.23 L431.08 245.28 L431.42 236.61 L431.75 222.82 L432.08 204.84 L432.42 183.91 L432.75 161.45 L433.08 138.99 L433.42 118.06 L433.75 100.08 L434.08 86.29 L434.42 77.62 L434.75 74.67 L435.10 77.58 L435.46 86.11 L435.81 99.69 L436.17 117.39 L436.52 138.00 L436.88 160.12 L437.23 182.23 L437.58 202.84 L437.94 220.54 L438.29 234.12 L438.65 242.66 L439.00 245.57 L439.33 242.72 L439.67 234.39 L440.00 221.12 L440.33 203.84 L440.67 183.72 L441.00 162.12 L441.33 140.52 L441.67 120.39 L442.00 103.11 L442.33 89.85 L442.67 81.51 L443.00 78.67 L443.35 81.45 L443.71 89.61 L444.06 102.60 L444.42 119.52 L444.77 139.22 L445.12 160.37 L445.48 181.51 L445.83 201.22 L446.19 218.14 L446.54 231.12 L446.90 239.28 L447.25 242.07 L447.60 239.30 L447.96 231.20 L448.31 218.31 L448.67 201.51 L449.02 181.94 L449.38 160.95 L449.73 139.96 L450.08 120.39 L450.44 103.59 L450.79 90.70 L451.15 82.60 L451.50 79.83 L451.85 82.21 L452.19 89.20 L452.54 100.40 L452.88 115.16 L453.23 132.62 L453.58 151.76 L453.92 171.47 L454.27 190.62 L454.62 208.07 L454.96 222.83 L455.31 234.03 L455.65 241.02 L456.00 243.40 L456.34 241.33 L456.68 235.23 L457.02 225.39 L457.36 212.33 L457.70 196.68 L458.04 179.23 L458.38 160.87 L458.71 142.50 L459.05 125.06 L459.39 109.41 L459.73 96.34 L460.07 86.51 L460.41 80.40 L460.75 78.33 L461.10 80.74 L461.44 87.81 L461.79 99.13 L462.13 114.05 L462.48 131.71 L462.83 151.06 L463.17 171.00 L463.52 190.36 L463.87 208.01 L464.21 222.94 L464.56 234.26 L464.90 241.33 L465.25 243.73 L465.58 241.94 L465.92 236.64 L466.25 228.07 L466.58 216.59 L466.92 202.72 L467.25 187.05 L467.58 170.27 L467.92 153.13 L468.25 136.35 L468.58 120.68 L468.92 106.81 L469.25 95.33 L469.58 86.76 L469.92 81.46 L470.25 79.67 L470.60 81.43 L470.95 86.66 L471.30 95.11 L471.65 106.42 L472.00 120.10 L472.35 135.54 L472.70 152.08 L473.05 168.99 L473.40 185.52 L473.75 200.97 L474.10 214.64 L474.45 225.96 L474.80 234.41 L475.15 239.63 L475.50 241.40 L475.84 240.05 L476.18 236.03 L476.51 229.49 L476.85 220.64 L477.19 209.80 L477.53 197.32 L477.87 183.63 L478.21 169.21 L478.54 154.53 L478.88 140.10 L479.22 126.42 L479.56 113.94 L479.90 103.09 L480.24 94.25 L480.57 87.70 L480.91 83.69 L481.25 82.33 L481.59 83.66 L481.93 87.60 L482.26 94.01 L482.60 102.68 L482.94 113.31 L483.28 125.54 L483.62 138.95 L483.96 153.09 L484.29 167.48 L484.63 181.62 L484.97 195.03 L485.31 207.26 L485.65 217.89 L485.99 226.56 L486.32 232.97 L486.66 236.91 L487.00 238.23 L487.33 237.07 L487.67 233.60 L488.00 227.95 L488.33 220.27 L488.67 210.81 L489.00 199.84 L489.33 187.71 L489.67 174.78 L490.00 161.45 L490.33 148.12 L490.67 135.19 L491.00 123.06 L491.33 112.09 L491.67 102.63 L492.00 94.95 L492.33 89.30 L492.67 85.83 L493.00 84.67 L493.34 85.70 L493.68 88.79 L494.03 93.84 L494.37 100.72 L494.71 109.23 L495.05 119.15 L495.39 130.21 L495.74 142.10 L496.08 154.50 L496.42 167.07 L496.76 179.47 L497.11 191.36 L497.45 202.42 L497.79 212.34 L498.13 220.85 L498.47 227.73 L498.82 232.78 L499.16 235.86 L499.50 236.90 L499.85 236.05 L500.19 233.53 L500.54 229.40 L500.88 223.73 L501.23 216.67 L501.57 208.37 L501.92 199.01 L502.26 188.80 L502.61 177.98 L502.95 166.78 L503.30 155.45 L503.64 144.25 L503.99 133.43 L504.33 123.23 L504.68 113.87 L505.02 105.56 L505.37 98.50 L505.71 92.84 L506.06 88.70 L506.40 86.18 L506.75 85.33 L507.08 85.98 L507.42 87.90 L507.75 91.08 L508.08 95.44 L508.42 100.92 L508.75 107.43 L509.08 114.85 L509.42 123.06 L509.75 131.91 L510.08 141.26 L510.42 150.94 L510.75 160.78 L511.08 170.63 L511.42 180.31 L511.75 189.66 L512.08 198.51 L512.42 206.71 L512.75 214.13 L513.08 220.64 L513.42 226.12 L513.75 230.49 L514.08 233.66 L514.42 235.59 L514.75 236.23 L515.09 235.80 L515.42 234.49 L515.76 232.33 L516.09 229.34 L516.43 225.55 L516.77 221.02 L517.10 215.79 L517.44 209.92 L517.78 203.49 L518.11 196.57 L518.45 189.24 L518.78 181.58 L519.12 173.69 L519.46 165.66 L519.79 157.58 L520.13 149.55 L520.47 141.65 L520.80 134.00 L521.14 126.67 L521.47 119.74 L521.81 113.31 L522.15 107.45 L522.48 102.21 L522.82 97.68 L523.16 93.90 L523.49 90.91 L523.83 88.74 L524.16 87.44 L524.50 87.00 L524.62 87.56 L524.78 88.27 L524.97 89.14 L525.18 90.18 L525.39 91.41 L525.60 92.83 L525.81 94.55 L526.04 96.57 L526.28 98.78 L526.50 101.06 L526.72 103.28 L526.90 105.33 L527.05 107.15 L527.17 108.80 L527.27 110.40 L527.37 112.06 L527.48 113.89 L527.60 116.00 L527.74 118.42 L527.88 121.07 L528.03 123.89 L528.19 126.82 L528.34 129.82 L528.50 132.83 L528.66 136.01 L528.84 139.43 L529.01 142.92 L529.18 146.29 L529.35 149.38 L529.50 152.00 L529.63 153.86 L529.75 155.03 L529.85 155.92 L529.96 156.91 L530.09 158.42 L530.25 160.83 L530.45 164.44 L530.67 168.97 L530.92 174.01 L531.16 179.14 L531.39 183.94 L531.60 188.00 L531.77 191.22 L531.91 193.94 L532.04 196.32 L532.17 198.56 L532.32 200.84 L532.50 203.33 L532.72 206.15 L532.97 209.16 L533.24 212.21 L533.51 215.14 L533.77 217.79 L534.00 220.00 L534.20 221.71 L534.38 223.02 L534.55 224.06 L534.70 224.94 L534.85 225.77 L535.00 226.67 L535.14 227.71 L535.26 228.83 L535.38 229.90 L535.49 230.80 L535.62 231.43 L535.75 231.67 L535.88 231.58 L536.01 231.27 L536.14 230.68 L536.29 229.75 L536.48 228.44 L536.70 226.67 L536.99 224.21 L537.33 221.08 L537.71 217.55 L538.09 213.92 L538.44 210.47 L538.75 207.50 L539.01 204.97 L539.24 202.64 L539.45 200.49 L539.65 198.51 L539.83 196.69 L540.00 195.00 L540.15 193.75 L540.27 193.01 L540.37 192.42 L540.48 191.62 L540.62 190.27 L540.80 188.00 L541.04 184.43 L541.33 179.76 L541.64 174.53 L541.95 169.28 L542.25 164.53 L542.50 160.83 L542.70 158.42 L542.87 156.91 L543.01 155.92 L543.16 155.03 L543.31 153.86 L543.50 152.00 L543.72 149.38 L543.97 146.29 L544.23 142.92 L544.49 139.43 L544.75 136.01 L545.00 132.83 L545.25 129.76 L545.49 126.64 L545.74 123.57 L545.98 120.70 L546.20 118.13 L546.40 116.00 L546.57 114.42 L546.70 113.32 L546.82 112.53 L546.94 111.88 L547.08 111.21 L547.25 110.33 L547.47 109.26 L547.71 108.11 L547.98 106.93 L548.24 105.77 L548.51 104.67 L548.75 103.67 L548.98 102.74 L549.20 101.87 L549.41 101.05 L549.62 100.30 L549.81 99.63 L550.00 99.07 L550.17 98.60 L550.32 98.21 L550.47 97.92 L550.61 97.70 L550.75 97.58 L550.90 97.53 L551.06 97.58 L551.22 97.70 L551.38 97.92 L551.55 98.21 L551.72 98.60 L551.90 99.07 L552.09 99.64 L552.28 100.33 L552.48 101.10 L552.69 101.93 L552.89 102.79 L553.10 103.67 L553.31 104.56 L553.53 105.50 L553.76 106.46 L553.98 107.46 L554.19 108.47 L554.40 109.50 L554.58 110.43 L554.75 111.23 L554.91 112.06 L555.07 113.04 L555.27 114.31 L555.50 116.00 L555.78 118.18 L556.08 120.76 L556.41 123.62 L556.76 126.67 L557.13 129.77 L557.50 132.83 L557.90 136.01 L558.34 139.43 L558.80 142.92 L559.24 146.29 L559.65 149.38 L560.00 152.00 L560.27 154.00 L560.46 155.49 L560.62 156.69 L560.79 157.83 L560.98 159.13 L561.25 160.83 L561.60 162.99 L562.00 165.43 L562.44 168.03 L562.89 170.69 L563.33 173.27 L563.75 175.67 L564.15 177.95 L564.55 180.22 L564.94 182.43 L565.31 184.50 L565.67 186.38 L566.00 188.00 L566.28 189.29 L566.52 190.29 L566.73 191.10 L566.95 191.81 L567.20 192.52 L567.50 193.33 L567.86 194.26 L568.26 195.22 L568.69 196.18 L569.13 197.11 L569.57 197.98 L570.00 198.73 L570.42 199.39 L570.85 199.96 L571.27 200.47 L571.70 200.91 L572.11 201.31 L572.50 201.67 L572.87 201.99 L573.22 202.26 L573.56 202.49 L573.90 202.66 L574.24 202.76 L574.60 202.80 L574.98 202.76 L575.37 202.64 L575.77 202.46 L576.16 202.23 L576.54 201.96 L576.90 201.67 L577.23 201.35 L577.53 201.00 L577.81 200.61 L578.10 200.17 L578.41 199.70 L578.75 199.17 L579.13 198.57 L579.54 197.91 L579.96 197.20 L580.39 196.47 L580.83 195.73 L581.25 195.00 L581.67 194.28 L582.08 193.55 L582.50 192.81 L582.92 192.07 L583.33 191.33 L583.75 190.60 L584.17 189.86 L584.60 189.12 L585.03 188.37 L585.46 187.64 L585.87 186.93 L586.25 186.27 L586.60 185.66 L586.91 185.10 L587.21 184.56 L587.51 184.03 L587.84 183.47 L588.20 182.87 L588.60 182.20 L589.03 181.50 L589.48 180.77 L589.94 180.03 L590.42 179.30 L590.90 178.60 L591.39 177.92 L591.90 177.23 L592.42 176.56 L592.94 175.91 L593.47 175.27 L594.00 174.67 L594.53 174.09 L595.06 173.55 L595.59 173.02 L596.13 172.51 L596.67 172.02 L597.20 171.53 L597.73 171.05 L598.27 170.58 L598.81 170.12 L599.34 169.68 L599.87 169.26 L600.40 168.87 L600.92 168.50 L601.44 168.16 L601.95 167.83 L602.46 167.53 L602.98 167.23 L603.50 166.93 L604.03 166.64 L604.56 166.36 L605.09 166.09 L605.63 165.83 L606.17 165.58 L606.70 165.33 L607.23 165.10 L607.77 164.87 L608.31 164.65 L608.84 164.45 L609.37 164.25 L609.90 164.07 L610.42 163.90 L610.93 163.74 L611.43 163.59 L611.94 163.45 L612.46 163.32 L613.00 163.20 L613.60 163.08 L614.27 162.96 L614.94 162.85 L615.58 162.75 L616.11 162.66 L616.50 162.60" stroke="#ff0000" stroke-width="1.05" fill="none" stroke-linejoin="round"/></g>
<path d="M561 89.5 H601" stroke="#ff0000" stroke-width="1" fill="none"/>

<!-- resize grip -->
<g shape-rendering="crispEdges">
<rect x="635" y="463" width="1" height="1" fill="#d3d1cd"/><rect x="636" y="464" width="1" height="1" fill="#ffffff"/>
<rect x="632" y="463" width="1" height="1" fill="#d3d1cd"/><rect x="633" y="464" width="1" height="1" fill="#ffffff"/>
<rect x="629" y="463" width="1" height="1" fill="#d3d1cd"/><rect x="630" y="464" width="1" height="1" fill="#ffffff"/>
<rect x="626" y="463" width="1" height="1" fill="#d3d1cd"/><rect x="627" y="464" width="1" height="1" fill="#ffffff"/>
<rect x="635" y="460" width="1" height="1" fill="#d3d1cd"/><rect x="636" y="461" width="1" height="1" fill="#ffffff"/>
<rect x="632" y="460" width="1" height="1" fill="#d3d1cd"/><rect x="633" y="461" width="1" height="1" fill="#ffffff"/>
<rect x="629" y="460" width="1" height="1" fill="#d3d1cd"/><rect x="630" y="461" width="1" height="1" fill="#ffffff"/>
<rect x="635" y="457" width="1" height="1" fill="#d3d1cd"/><rect x="636" y="458" width="1" height="1" fill="#ffffff"/>
<rect x="632" y="457" width="1" height="1" fill="#d3d1cd"/><rect x="633" y="458" width="1" height="1" fill="#ffffff"/>
<rect x="635" y="454" width="1" height="1" fill="#d3d1cd"/><rect x="636" y="455" width="1" height="1" fill="#ffffff"/>
</g>
</svg>
</div>
</body>
</html>
